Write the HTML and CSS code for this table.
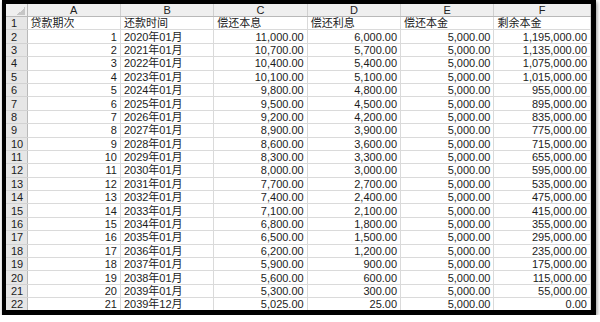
FILE: index.html
```html
<!DOCTYPE html>
<html lang="zh-CN">
<head>
    <meta charset="UTF-8">
    <title>还款计划表</title>
    <link rel="stylesheet" href="styles.css">
</head>
<body>
    <div class="frame">
        <table class="sheet">
            <colgroup>
                <col class="col-idx">
                <col class="col-data">
                <col class="col-data">
                <col class="col-data">
                <col class="col-data">
                <col class="col-data">
                <col>
            </colgroup>
            <thead>
                <tr>
                    <th class="corner"></th>
                    <th>A</th>
                    <th>B</th>
                    <th>C</th>
                    <th>D</th>
                    <th>E</th>
                    <th>F</th>
                </tr>
            </thead>
            <tbody>
                <tr><th>1</th><td>贷款期次</td><td>还款时间</td><td>偿还本息</td><td>偿还利息</td><td>偿还本金</td><td>剩余本金</td></tr>
                <tr><th>2</th><td class="num">1</td><td>2020年01月</td><td class="num">11,000.00</td><td class="num">6,000.00</td><td class="num">5,000.00</td><td class="num">1,195,000.00</td></tr>
                <tr><th>3</th><td class="num">2</td><td>2021年01月</td><td class="num">10,700.00</td><td class="num">5,700.00</td><td class="num">5,000.00</td><td class="num">1,135,000.00</td></tr>
                <tr><th>4</th><td class="num">3</td><td>2022年01月</td><td class="num">10,400.00</td><td class="num">5,400.00</td><td class="num">5,000.00</td><td class="num">1,075,000.00</td></tr>
                <tr><th>5</th><td class="num">4</td><td>2023年01月</td><td class="num">10,100.00</td><td class="num">5,100.00</td><td class="num">5,000.00</td><td class="num">1,015,000.00</td></tr>
                <tr><th>6</th><td class="num">5</td><td>2024年01月</td><td class="num">9,800.00</td><td class="num">4,800.00</td><td class="num">5,000.00</td><td class="num">955,000.00</td></tr>
                <tr><th>7</th><td class="num">6</td><td>2025年01月</td><td class="num">9,500.00</td><td class="num">4,500.00</td><td class="num">5,000.00</td><td class="num">895,000.00</td></tr>
                <tr><th>8</th><td class="num">7</td><td>2026年01月</td><td class="num">9,200.00</td><td class="num">4,200.00</td><td class="num">5,000.00</td><td class="num">835,000.00</td></tr>
                <tr><th>9</th><td class="num">8</td><td>2027年01月</td><td class="num">8,900.00</td><td class="num">3,900.00</td><td class="num">5,000.00</td><td class="num">775,000.00</td></tr>
                <tr><th>10</th><td class="num">9</td><td>2028年01月</td><td class="num">8,600.00</td><td class="num">3,600.00</td><td class="num">5,000.00</td><td class="num">715,000.00</td></tr>
                <tr><th>11</th><td class="num">10</td><td>2029年01月</td><td class="num">8,300.00</td><td class="num">3,300.00</td><td class="num">5,000.00</td><td class="num">655,000.00</td></tr>
                <tr><th>12</th><td class="num">11</td><td>2030年01月</td><td class="num">8,000.00</td><td class="num">3,000.00</td><td class="num">5,000.00</td><td class="num">595,000.00</td></tr>
                <tr><th>13</th><td class="num">12</td><td>2031年01月</td><td class="num">7,700.00</td><td class="num">2,700.00</td><td class="num">5,000.00</td><td class="num">535,000.00</td></tr>
                <tr><th>14</th><td class="num">13</td><td>2032年01月</td><td class="num">7,400.00</td><td class="num">2,400.00</td><td class="num">5,000.00</td><td class="num">475,000.00</td></tr>
                <tr><th>15</th><td class="num">14</td><td>2033年01月</td><td class="num">7,100.00</td><td class="num">2,100.00</td><td class="num">5,000.00</td><td class="num">415,000.00</td></tr>
                <tr><th>16</th><td class="num">15</td><td>2034年01月</td><td class="num">6,800.00</td><td class="num">1,800.00</td><td class="num">5,000.00</td><td class="num">355,000.00</td></tr>
                <tr><th>17</th><td class="num">16</td><td>2035年01月</td><td class="num">6,500.00</td><td class="num">1,500.00</td><td class="num">5,000.00</td><td class="num">295,000.00</td></tr>
                <tr><th>18</th><td class="num">17</td><td>2036年01月</td><td class="num">6,200.00</td><td class="num">1,200.00</td><td class="num">5,000.00</td><td class="num">235,000.00</td></tr>
                <tr><th>19</th><td class="num">18</td><td>2037年01月</td><td class="num">5,900.00</td><td class="num">900.00</td><td class="num">5,000.00</td><td class="num">175,000.00</td></tr>
                <tr><th>20</th><td class="num">19</td><td>2038年01月</td><td class="num">5,600.00</td><td class="num">600.00</td><td class="num">5,000.00</td><td class="num">115,000.00</td></tr>
                <tr><th>21</th><td class="num">20</td><td>2039年01月</td><td class="num">5,300.00</td><td class="num">300.00</td><td class="num">5,000.00</td><td class="num">55,000.00</td></tr>
                <tr><th>22</th><td class="num">21</td><td>2039年12月</td><td class="num">5,025.00</td><td class="num">25.00</td><td class="num">5,000.00</td><td class="num">0.00</td></tr>
            </tbody>
        </table>
    </div>
</body>
</html>
```

FILE: styles.css
```css
:root {
    --grid-line: #dadada;
    --head-bg: #efefef;
    --index-bg: #e6e6e6;
    --text-color: #1c1c1c;
}
* {
    margin: 0;
    padding: 0;
    box-sizing: border-box;
}
body {
    background-color: #ffffff;
    padding: 0 0 0 2px;
    font-family: "Liberation Sans", "Noto Sans CJK SC", Arial, sans-serif;
    color: var(--text-color);
}
.frame {
    width: 594px;
    height: 315px;
    border-style: solid;
    border-color: #000000;
    border-width: 4px 5px 5px 4px;
    background-color: #ffffff;
    box-shadow: 1px 2px 4px rgba(0,0,0,0.45);
    overflow: hidden;
}
.sheet {
    width: 100%;
    table-layout: fixed;
    border-collapse: collapse;
    font-size: 11px;
    line-height: 12px;
}
.col-idx {
    width: 21px;
}
.col-data {
    width: 93.4px;
}
.sheet thead th {
    height: 12px;
    background-color: var(--head-bg);
    font-weight: normal;
    text-align: center;
    color: #222222;
    border-right: 1px solid #d0d0d0;
    border-bottom: 1px solid #b9b9b9;
}
.sheet thead th.corner {
    background: linear-gradient(to bottom right, transparent 50%, #c6c6c6 50%) no-repeat right 2px bottom 1px / 8px 8px, var(--head-bg);
    border-right: 1px solid #b9b9b9;
}
.sheet tbody th {
    height: 13.4px;
    background-color: var(--index-bg);
    font-weight: normal;
    text-align: left;
    padding-left: 5px;
    border-bottom: 1px solid #d2d2d2;
    border-right: 1px solid #b9b9b9;
}
.sheet td {
    height: 13.4px;
    padding: 0 3px;
    white-space: nowrap;
    overflow: hidden;
    border-right: 1px solid var(--grid-line);
    border-bottom: 1px solid var(--grid-line);
}
.sheet td.num {
    text-align: right;
}
```
